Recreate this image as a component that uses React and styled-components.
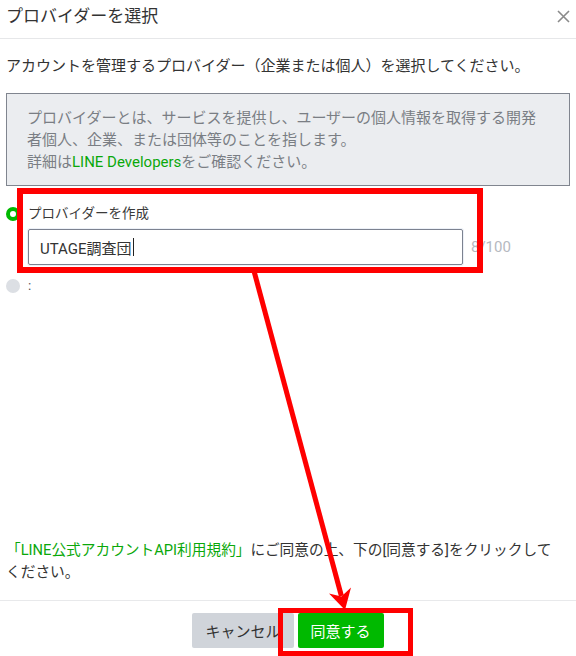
import React from 'react';
import styled, { createGlobalStyle } from 'styled-components';

const GlobalStyle = createGlobalStyle`
  html, body {
    margin: 0;
    padding: 0;
    background: #fff;
  }
  body {
    font-family: Roboto, "Noto Sans CJK JP", sans-serif;
    color: #333;
  }
`;

const App = () => {
  return (
    <>
      <GlobalStyle />
      <Page>
        <Header>
          <Title>プロバイダーを選択</Title>
          <CloseButton aria-label="閉じる">
            <svg width="13" height="13" viewBox="0 0 13 13">
              <path d="M1 1 L12 12 M12 1 L1 12" stroke="#8a8a8a" strokeWidth="1.6" fill="none" />
            </svg>
          </CloseButton>
        </Header>

        <Body>
          <Lead>アカウントを管理するプロバイダー（企業または個人）を選択してください。</Lead>

          <InfoBox>
            プロバイダーとは、サービスを提供し、ユーザーの個人情報を取得する開発<br />
            者個人、企業、または団体等のことを指します。<br />
            詳細は<GreenLink>LINE Developers</GreenLink>をご確認ください。
          </InfoBox>

          <Option $first>
            <Radio $checked />
            <OptionLabel>プロバイダーを作成</OptionLabel>
          </Option>
          <InputRow>
            <FakeInput>
              UTAGE調査団<Caret />
            </FakeInput>
            <Counter>8/100</Counter>
          </InputRow>

          <Option>
            <Radio />
            <OptionLabel $muted>:</OptionLabel>
          </Option>

          <Spacer />

          <Terms>
            <GreenLink>「LINE公式アカウントAPI利用規約」</GreenLink>にご同意の上、下の[同意する]をクリックして<br />
            ください。
          </Terms>
        </Body>

        <Footer>
          <Button>キャンセル</Button>
          <Button $primary>同意する</Button>
        </Footer>

        {/* annotation marks drawn over the screen */}
        <Annotation width="576" height="656" viewBox="0 0 576 656">
          <rect x="20" y="191" width="460" height="79" fill="none" stroke="#ff0000" strokeWidth="6" />
          <rect x="280.5" y="610.5" width="130" height="43" fill="none" stroke="#ff0000" strokeWidth="5" />
          <line x1="254" y1="271" x2="341.4" y2="596" stroke="#ff0000" strokeWidth="5" />
          <polygon points="345,610 329,593.5 341.4,596.5 351,587.5" fill="#ff0000" />
        </Annotation>
      </Page>
    </>
  );
};

const Page = styled.div`
  position: relative;
  width: 576px;
  height: 656px;
  display: flex;
  flex-direction: column;
  background: #fff;
  overflow: hidden;
`;

const Header = styled.div`
  box-sizing: border-box;
  height: 39px;
  padding: 4px 6px 0;
  display: flex;
  justify-content: space-between;
  align-items: flex-start;
  border-bottom: 1px solid #e6e7e9;
`;

const Title = styled.h1`
  margin: 0;
  font-size: 17px;
  line-height: 24px;
  font-weight: 400;
  color: #333;
`;

const CloseButton = styled.button`
  border: none;
  background: none;
  padding: 0;
  height: 24px;
  width: 13px;
  display: flex;
  align-items: center;
  justify-content: center;
  cursor: pointer;
`;

const Body = styled.div`
  flex: 1;
  display: flex;
  flex-direction: column;
  padding: 0 6px;
`;

const Lead = styled.p`
  margin: 16px 0 0;
  font-size: 15px;
  line-height: 22px;
  color: #333;
  white-space: nowrap;
`;

const InfoBox = styled.div`
  margin-top: 16px;
  border: 1px solid #80858f;
  background: #ebedf0;
  padding: 13px 20px 12px;
  font-size: 15px;
  line-height: 22px;
  color: #7a7e84;
  white-space: nowrap;
`;

const GreenLink = styled.span`
  color: #0aa80a;
`;

const Option = styled.div`
  display: grid;
  grid-template-columns: 22px auto;
  align-items: center;
  margin-top: ${(p) => (p.$first ? '17px' : '10px')};
  height: 20px;
`;

const Radio = styled.span`
  box-sizing: border-box;
  width: 14px;
  height: 14px;
  border-radius: 50%;
  background: ${(p) => (p.$checked ? '#fff' : '#dcdfe4')};
  border: ${(p) => (p.$checked ? '4.5px solid #00b900' : 'none')};
  margin-top: 2px;
`;

const OptionLabel = styled.span`
  font-size: 13.5px;
  line-height: 20px;
  color: ${(p) => (p.$muted ? '#555' : '#3a3a3a')};
`;

const InputRow = styled.div`
  display: flex;
  align-items: center;
  margin-top: 6px;
  padding-left: 22px;
`;

const FakeInput = styled.div`
  box-sizing: border-box;
  width: 435px;
  height: 36px;
  border: 1px solid #7c8290;
  border-radius: 2px;
  padding: 0 11px;
  display: flex;
  align-items: center;
  font-size: 15px;
  color: #333;
  box-shadow: 0 0 0 1px #edf1f8;
`;

const Caret = styled.span`
  display: inline-block;
  width: 1px;
  height: 18px;
  background: #222;
  margin-left: 1px;
`;

const Counter = styled.span`
  margin-left: 8px;
  font-size: 15px;
  color: #b5b9bf;
`;

const Spacer = styled.div`
  flex: 1;
`;

const Terms = styled.p`
  margin: 0 0 17px;
  font-size: 14.7px;
  line-height: 22px;
  color: #333;
  white-space: nowrap;
`;

const Footer = styled.div`
  border-top: 1px solid #e8e9eb;
  padding: 12px 0 8px;
  display: flex;
  justify-content: center;
  gap: 4px;
`;

const Button = styled.button`
  height: 35px;
  padding: 0 13px;
  border: none;
  border-radius: 2px;
  font-family: Roboto, "Noto Sans CJK JP", sans-serif;
  font-size: 15px;
  background: ${(p) => (p.$primary ? '#00b900' : '#d0d4da')};
  color: ${(p) => (p.$primary ? '#fff' : '#333')};
  cursor: pointer;
`;

const Annotation = styled.svg`
  position: absolute;
  top: 0;
  left: 0;
  pointer-events: none;
`;

export default App;
